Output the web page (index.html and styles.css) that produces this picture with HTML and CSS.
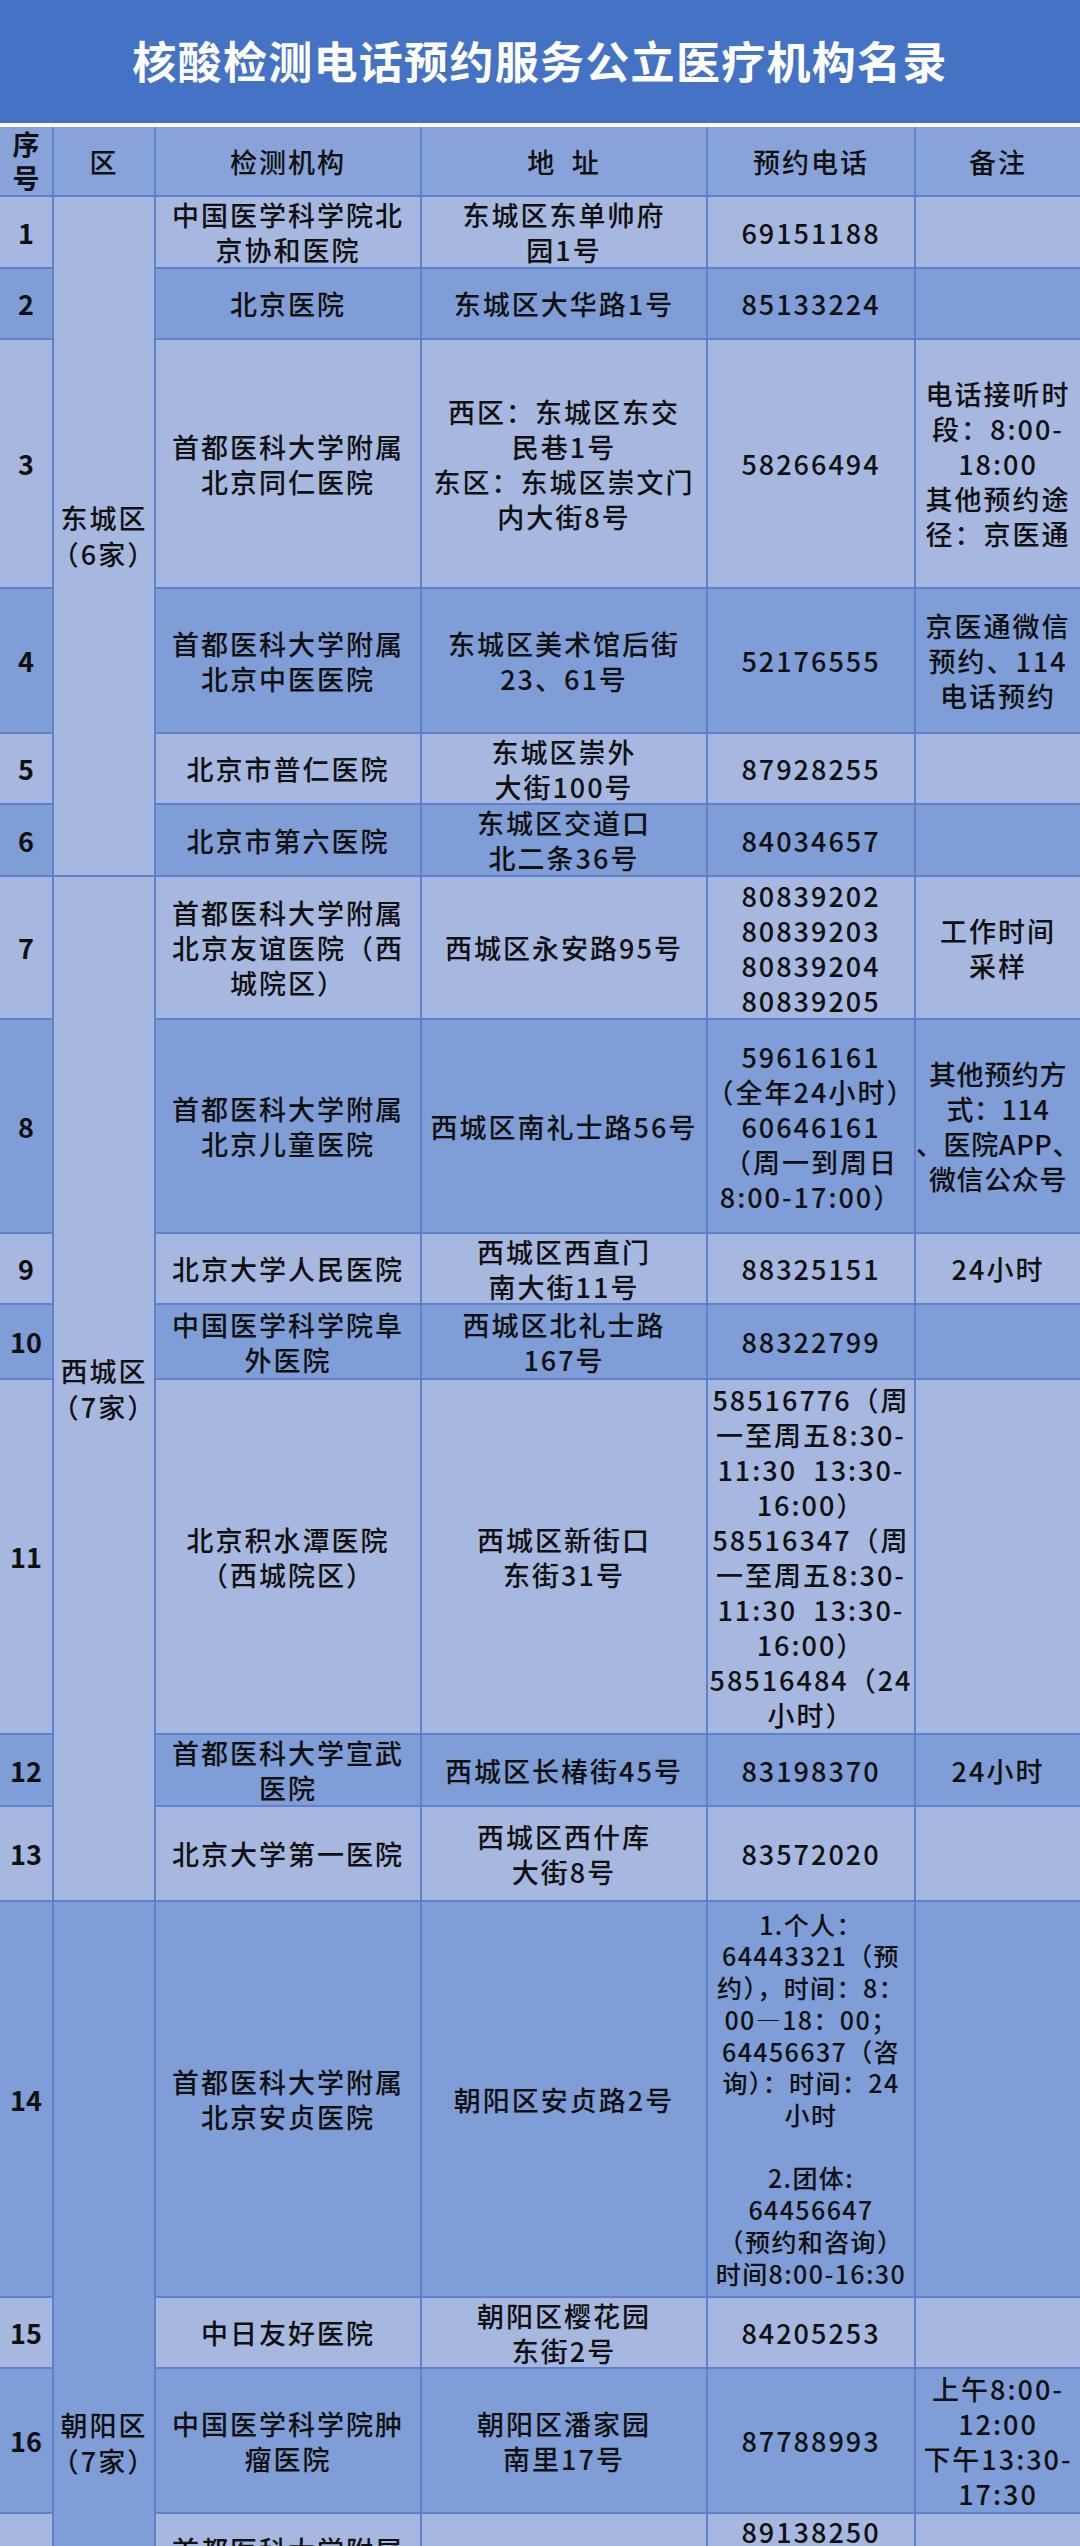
FILE: index.html
```html
<!DOCTYPE html>
<html lang="zh-CN">
<head>
<meta charset="utf-8">
<title>核酸检测电话预约服务公立医疗机构名录</title>
<link rel="stylesheet" href="styles.css">
</head>
<body>
<div class="page">
  <header class="title">核酸检测电话预约服务公立医疗机构名录</header>
  <div class="sheet">
    <div class="row row--head">
      <div class="cell cell--num">序<br>号</div>
      <div class="cell">区</div>
      <div class="cell">检测机构</div>
      <div class="cell">地&ensp;址</div>
      <div class="cell">预约电话</div>
      <div class="cell">备注</div>
    </div>

    <div class="row row--light">
      <div class="cell cell--num">1</div>
      <div class="cell cell--district district--dc">东城区<br>（6家）</div>
      <div class="cell">中国医学科学院北<br>京协和医院</div>
      <div class="cell">东城区东单帅府<br>园1号</div>
      <div class="cell">69151188</div>
      <div class="cell"></div>
    </div>
    <div class="row row--dark">
      <div class="cell cell--num">2</div>
      <div class="cell">北京医院</div>
      <div class="cell">东城区大华路1号</div>
      <div class="cell">85133224</div>
      <div class="cell"></div>
    </div>
    <div class="row row--light">
      <div class="cell cell--num">3</div>
      <div class="cell">首都医科大学附属<br>北京同仁医院</div>
      <div class="cell">西区：东城区东交<br>民巷1号<br>东区：东城区崇文门<br>内大街8号</div>
      <div class="cell">58266494</div>
      <div class="cell">电话接听时<br>段：8:00-<br>18:00<br>其他预约途<br>径：京医通</div>
    </div>
    <div class="row row--dark">
      <div class="cell cell--num">4</div>
      <div class="cell">首都医科大学附属<br>北京中医医院</div>
      <div class="cell">东城区美术馆后街<br>23、61号</div>
      <div class="cell">52176555</div>
      <div class="cell">京医通微信<br>预约、114<br>电话预约</div>
    </div>
    <div class="row row--light">
      <div class="cell cell--num">5</div>
      <div class="cell">北京市普仁医院</div>
      <div class="cell">东城区崇外<br>大街100号</div>
      <div class="cell">87928255</div>
      <div class="cell"></div>
    </div>
    <div class="row row--dark">
      <div class="cell cell--num">6</div>
      <div class="cell">北京市第六医院</div>
      <div class="cell">东城区交道口<br>北二条36号</div>
      <div class="cell">84034657</div>
      <div class="cell"></div>
    </div>

    <div class="row row--light">
      <div class="cell cell--num">7</div>
      <div class="cell cell--district district--xc">西城区<br>（7家）</div>
      <div class="cell">首都医科大学附属<br>北京友谊医院（西<br>城院区）</div>
      <div class="cell">西城区永安路95号</div>
      <div class="cell">80839202<br>80839203<br>80839204<br>80839205</div>
      <div class="cell">工作时间<br>采样</div>
    </div>
    <div class="row row--dark">
      <div class="cell cell--num">8</div>
      <div class="cell">首都医科大学附属<br>北京儿童医院</div>
      <div class="cell">西城区南礼士路56号</div>
      <div class="cell">59616161<br>（全年24小时）<br>60646161<br>（周一到周日<br>8:00-17:00）</div>
      <div class="cell cell--tight">其他预约方<br>式：114<br>、医院APP、<br>微信公众号</div>
    </div>
    <div class="row row--light">
      <div class="cell cell--num">9</div>
      <div class="cell">北京大学人民医院</div>
      <div class="cell">西城区西直门<br>南大街11号</div>
      <div class="cell">88325151</div>
      <div class="cell">24小时</div>
    </div>
    <div class="row row--dark">
      <div class="cell cell--num">10</div>
      <div class="cell">中国医学科学院阜<br>外医院</div>
      <div class="cell">西城区北礼士路<br>167号</div>
      <div class="cell">88322799</div>
      <div class="cell"></div>
    </div>
    <div class="row row--light">
      <div class="cell cell--num">11</div>
      <div class="cell">北京积水潭医院<br>（西城院区）</div>
      <div class="cell">西城区新街口<br>东街31号</div>
      <div class="cell">58516776（周<br>一至周五8:30-<br>11:30&nbsp;&nbsp;13:30-<br>16:00）<br>58516347（周<br>一至周五8:30-<br>11:30&nbsp;&nbsp;13:30-<br>16:00）<br>58516484（24<br>小时）</div>
      <div class="cell"></div>
    </div>
    <div class="row row--dark">
      <div class="cell cell--num">12</div>
      <div class="cell">首都医科大学宣武<br>医院</div>
      <div class="cell">西城区长椿街45号</div>
      <div class="cell">83198370</div>
      <div class="cell">24小时</div>
    </div>
    <div class="row row--light">
      <div class="cell cell--num">13</div>
      <div class="cell">北京大学第一医院</div>
      <div class="cell">西城区西什库<br>大街8号</div>
      <div class="cell">83572020</div>
      <div class="cell"></div>
    </div>

    <div class="row row--dark">
      <div class="cell cell--num">14</div>
      <div class="cell cell--district district--cy">朝阳区<br>（7家）</div>
      <div class="cell">首都医科大学附属<br>北京安贞医院</div>
      <div class="cell">朝阳区安贞路2号</div>
      <div class="cell cell--small">1.个人：<br>64443321（预<br>约），时间：8：<br>00—18：00；<br>64456637（咨<br>询）：时间：24<br>小时<br><br>2.团体:<br>64456647<br>（预约和咨询）<br>时间8:00-16:30</div>
      <div class="cell"></div>
    </div>
    <div class="row row--light">
      <div class="cell cell--num">15</div>
      <div class="cell">中日友好医院</div>
      <div class="cell">朝阳区樱花园<br>东街2号</div>
      <div class="cell">84205253</div>
      <div class="cell"></div>
    </div>
    <div class="row row--dark">
      <div class="cell cell--num">16</div>
      <div class="cell">中国医学科学院肿<br>瘤医院</div>
      <div class="cell">朝阳区潘家园<br>南里17号</div>
      <div class="cell">87788993</div>
      <div class="cell">上午8:00-<br>12:00<br>下午13:30-<br>17:30</div>
    </div>
    <div class="row row--light">
      <div class="cell cell--num">17</div>
      <div class="cell">首都医科大学附属<br>北京朝阳医院</div>
      <div class="cell"></div>
      <div class="cell cell--top">89138250</div>
      <div class="cell"></div>
    </div>
    <div class="row row--dark">
      <div class="cell cell--num"></div>
      <div class="cell"></div>
      <div class="cell"></div>
      <div class="cell"></div>
      <div class="cell"></div>
    </div>
  </div>
</div>
</body>
</html>
```

FILE: styles.css
```css
* {
  box-sizing: border-box;
}

html,
body {
  margin: 0;
  padding: 0;
  background: #ffffff;
}

.page {
  width: 1080px;
  height: 2546px;
  overflow: hidden;
  font-family: "Noto Sans CJK SC", "Noto Sans", sans-serif;
  color: #101010;
}

.title {
  height: 127px;
  background: #4472c4;
  border-bottom: 4px solid #ffffff;
  color: #ffffff;
  font-size: 44px;
  font-weight: 700;
  letter-spacing: 1.3px;
  display: flex;
  align-items: center;
  justify-content: center;
  padding-bottom: 4px;
}

.sheet {
  display: grid;
  grid-template-columns: 52px 100px 264px 284px 206px 164px;
  grid-template-rows:
    68px 70px 69px 247px 143px 69px 70px
    141px 212px 69px 73px 353px 70px 93px
    394px 69px 143px 105px 359px;
  column-gap: 2px;
  row-gap: 2px;
  background: #5e81cb;
  font-size: 27px;
  font-weight: 500;
  line-height: 35px;
  letter-spacing: 2px;
}

.row {
  display: contents;
}

.cell {
  display: flex;
  align-items: center;
  justify-content: center;
  text-align: center;
  white-space: nowrap;
  overflow: visible;
  min-width: 0;
}

.row--head > .cell {
  background: #88a3d9;
}

.row--light > .cell {
  background: #a7b8e0;
}

.row--dark > .cell {
  background: #7f9dd6;
}

.row > .cell--num {
  font-weight: 700;
  letter-spacing: 0;
}

.row--head > .cell--num {
  line-height: 34px;
}

.row > .cell--district {
  line-height: 36px;
}

.district--dc {
  grid-row: span 6;
}

.district--xc {
  grid-row: span 7;
}

.row > .district--cy {
  grid-row: span 5;
  background: #7f9dd6;
  align-items: flex-start;
  padding-top: 505px;
}

.cell--small {
  font-size: 25px;
  line-height: 31.7px;
  letter-spacing: 1.4px;
}

.cell--tight {
  letter-spacing: 0.6px;
}

.cell--top {
  align-items: flex-start;
}
```
